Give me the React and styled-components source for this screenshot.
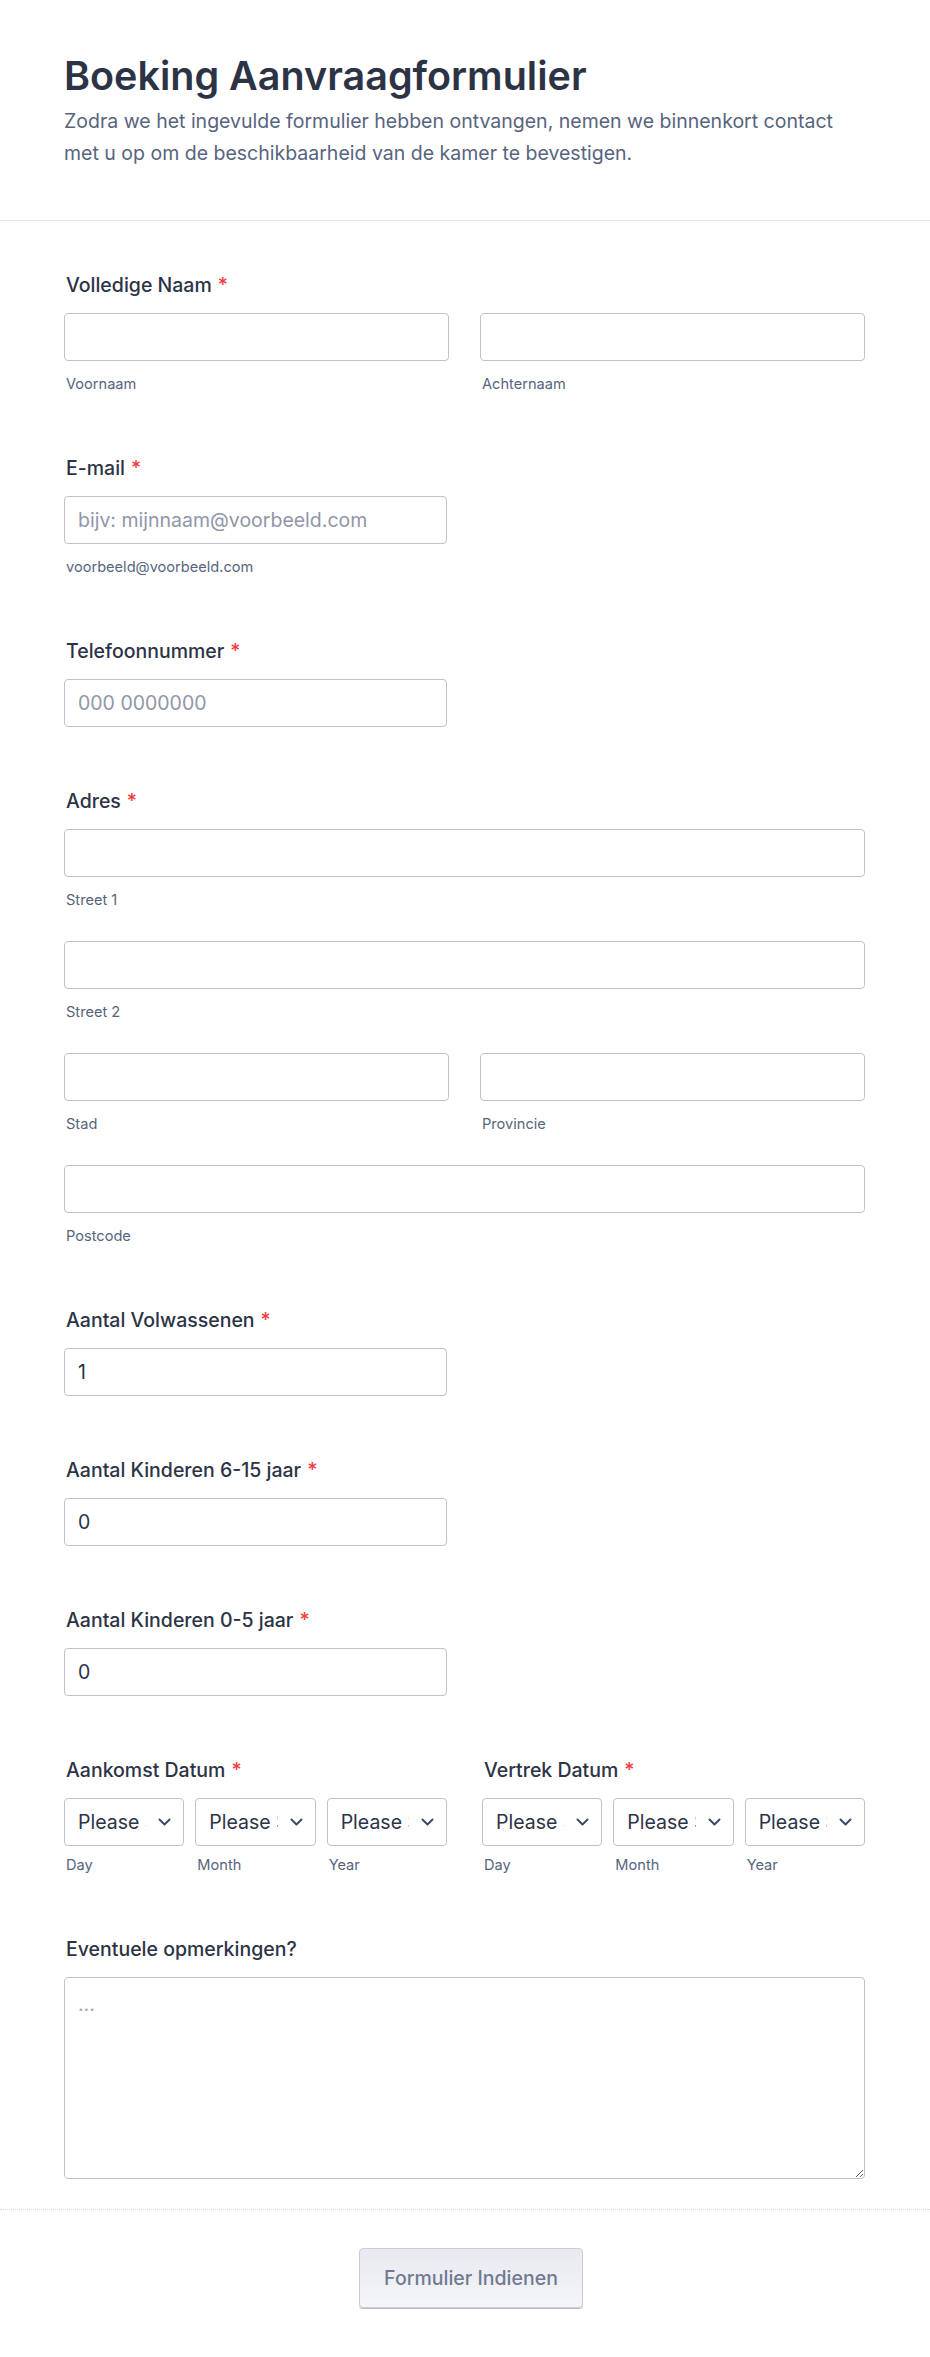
import React from 'react';
import styled, { createGlobalStyle } from 'styled-components';

const GlobalStyle = createGlobalStyle`
  html, body { margin: 0; padding: 0; background: #fff; }
  body {
    font-family: Inter, "Noto Sans", "Liberation Sans", sans-serif;
    color: #2c3345;
    -webkit-font-smoothing: antialiased;
  }
  *, *::before, *::after { box-sizing: border-box; }
`;

const Page = styled.div`
  width: 930px;
  background: #fff;
`;

const Header = styled.header`
  padding: 52px 64px 51px;
  border-bottom: 1px solid #e3e5ed;
`;

const Title = styled.h1`
  margin: 0;
  font-size: 39.5px;
  line-height: 48px;
  font-weight: 600;
  color: #2c3345;
`;

const Description = styled.p`
  margin: 6px 0 0;
  font-size: 19.5px;
  line-height: 31.5px;
  color: #57647e;
`;

const Body = styled.form`
  padding: 52px 65px 30px 64px;
  display: flex;
  flex-direction: column;
  gap: 62px;
`;

const Field = styled.div`
  display: flex;
  flex-direction: column;
`;

const Label = styled.label`
  display: block;
  font-size: 19.5px;
  line-height: 24px;
  font-weight: 500;
  color: #2c3345;
  margin-bottom: 16px;
  padding-left: 2px;
  white-space: nowrap;
`;

const Req = styled.span`
  color: #f23a3c;
  margin-left: 6px;
`;

const Input = styled.input`
  display: block;
  width: 100%;
  max-width: ${(p) => (p.$half ? '383px' : 'none')};
  height: 48px;
  border: 1px solid #bcc2ce;
  border-radius: 4px;
  padding: 0 13px;
  font-family: inherit;
  font-size: 19.5px;
  color: #2c3345;
  background: #fff;
  outline: none;
  &::placeholder { color: #8f96a8; }
`;

const SubLabel = styled.span`
  display: block;
  margin-top: ${(p) => (p.$tight ? '9px' : '13px')};
  font-size: 14.6px;
  line-height: 20px;
  color: #57647e;
  padding-left: 2px;
`;

const TwoCol = styled.div`
  display: grid;
  grid-template-columns: 1fr 1fr;
  column-gap: 31px;
`;

const Part = styled.div`
  display: flex;
  flex-direction: column;
`;

const Stack = styled.div`
  display: flex;
  flex-direction: column;
  gap: 31px;
`;

const DateRow = styled.div`
  display: grid;
  grid-template-columns: 383px 383px;
  justify-content: space-between;
`;

const DateParts = styled.div`
  display: grid;
  grid-template-columns: repeat(3, 1fr);
  column-gap: 11px;
`;

const SelectWrap = styled.div`
  position: relative;
`;

const Select = styled.select`
  appearance: none;
  -webkit-appearance: none;
  display: block;
  width: 100%;
  height: 48px;
  border: 1px solid #bcc2ce;
  border-radius: 4px;
  padding: 0 37px 0 13px;
  font-family: inherit;
  font-size: 19.5px;
  color: #2c3345;
  background: #fff;
  outline: none;
`;

const Chevron = styled.svg`
  position: absolute;
  right: 13px;
  top: 50%;
  transform: translateY(-50%);
  pointer-events: none;
`;

const TextArea = styled.textarea`
  display: block;
  width: 100%;
  height: 202px;
  border: 1px solid #bcc2ce;
  border-radius: 4px;
  padding: 14px 13px;
  font-family: inherit;
  font-size: 19.5px;
  line-height: 24px;
  color: #2c3345;
  background: #fff;
  outline: none;
  resize: vertical;
  &::placeholder { color: #a3a9b8; }
`;

const Footer = styled.div`
  border-top: 1px dotted #d5d8e2;
  padding: 38px 0 49px 12px;
  display: flex;
  justify-content: center;
`;

const SubmitButton = styled.button`
  height: 60px;
  padding: 0 24px;
  border: 1px solid #c9cdd8;
  border-radius: 4px;
  background: linear-gradient(180deg, #e8eaf0 0%, #f4f5f8 100%);
  box-shadow: 0 1px 0 #b9bdc9;
  font-family: inherit;
  font-size: 19.5px;
  font-weight: 500;
  color: #717a91;
  cursor: pointer;
`;

const ChevronIcon = () => (
  <Chevron width="13" height="8" viewBox="0 0 13 8" fill="none">
    <path d="M1.5 1.5l5 5 5-5" stroke="#3e4a63" strokeWidth="2" strokeLinecap="round" strokeLinejoin="round" />
  </Chevron>
);

const DateSelect = ({ sub }) => (
  <Part>
    <SelectWrap>
      <Select defaultValue="">
        <option value="">Please Select</option>
      </Select>
      <ChevronIcon />
    </SelectWrap>
    <SubLabel $tight>{sub}</SubLabel>
  </Part>
);

const DateField = ({ label }) => (
  <Part>
    <Label>
      {label}
      <Req>*</Req>
    </Label>
    <DateParts>
      <DateSelect sub="Day" />
      <DateSelect sub="Month" />
      <DateSelect sub="Year" />
    </DateParts>
  </Part>
);

export default function App() {
  return (
    <Page>
      <GlobalStyle />
      <Header>
        <Title>Boeking Aanvraagformulier</Title>
        <Description>
          Zodra we het ingevulde formulier hebben ontvangen, nemen we binnenkort contact met u op om de
          beschikbaarheid van de kamer te bevestigen.
        </Description>
      </Header>
      <Body onSubmit={(e) => e.preventDefault()}>
        <Field>
          <Label>
            Volledige Naam<Req>*</Req>
          </Label>
          <TwoCol>
            <Part>
              <Input type="text" />
              <SubLabel>Voornaam</SubLabel>
            </Part>
            <Part>
              <Input type="text" />
              <SubLabel>Achternaam</SubLabel>
            </Part>
          </TwoCol>
        </Field>

        <Field>
          <Label>
            E-mail<Req>*</Req>
          </Label>
          <Input type="email" $half placeholder="bijv: mijnnaam@voorbeeld.com" />
          <SubLabel>voorbeeld@voorbeeld.com</SubLabel>
        </Field>

        <Field>
          <Label>
            Telefoonnummer<Req>*</Req>
          </Label>
          <Input type="tel" $half placeholder="000 0000000" />
        </Field>

        <Field>
          <Label>
            Adres<Req>*</Req>
          </Label>
          <Stack>
            <Part>
              <Input type="text" />
              <SubLabel>Street 1</SubLabel>
            </Part>
            <Part>
              <Input type="text" />
              <SubLabel>Street 2</SubLabel>
            </Part>
            <TwoCol>
              <Part>
                <Input type="text" />
                <SubLabel>Stad</SubLabel>
              </Part>
              <Part>
                <Input type="text" />
                <SubLabel>Provincie</SubLabel>
              </Part>
            </TwoCol>
            <Part>
              <Input type="text" />
              <SubLabel>Postcode</SubLabel>
            </Part>
          </Stack>
        </Field>

        <Field>
          <Label>
            Aantal Volwassenen<Req>*</Req>
          </Label>
          <Input type="text" inputMode="numeric" $half defaultValue="1" />
        </Field>

        <Field>
          <Label>
            Aantal Kinderen 6-15 jaar<Req>*</Req>
          </Label>
          <Input type="text" inputMode="numeric" $half defaultValue="0" />
        </Field>

        <Field>
          <Label>
            Aantal Kinderen 0-5 jaar<Req>*</Req>
          </Label>
          <Input type="text" inputMode="numeric" $half defaultValue="0" />
        </Field>

        <DateRow>
          <DateField label="Aankomst Datum" />
          <DateField label="Vertrek Datum" />
        </DateRow>

        <Field>
          <Label>Eventuele opmerkingen?</Label>
          <TextArea placeholder="..." />
        </Field>
      </Body>
      <Footer>
        <SubmitButton type="button">Formulier Indienen</SubmitButton>
      </Footer>
    </Page>
  );
}
